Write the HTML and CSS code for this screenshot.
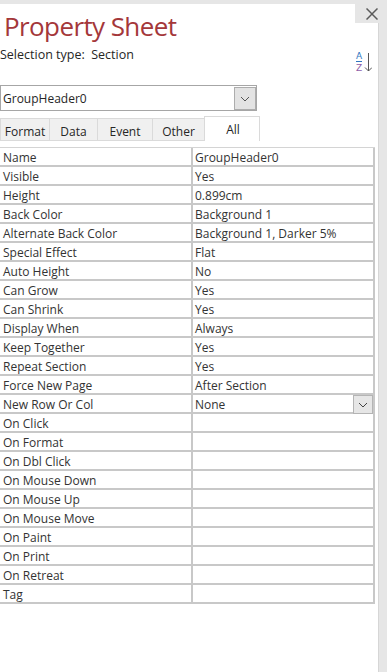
FILE: index.html
```html
<!DOCTYPE html>
<html lang="en">

<head>
  <meta charset="UTF-8">
  <meta name="viewport" content="width=device-width, initial-scale=1.0">
  <title>Property Sheet</title>
  <link rel="stylesheet" href="styles.css">
</head>

<body>
  <div class="topbar"></div>

  <div class="pane">
    <div class="sheet">
      <h1 class="sheet-title">Property Sheet</h1>

      <div class="subhead">
        <span class="selection-type">Selection type:&nbsp; Section</span>
        <span class="sort-icon">
          <span class="sort-letters">
            <span class="sort-a">A</span>
            <span class="sort-z">Z</span>
          </span>
          <svg width="8" height="20" viewBox="0 0 8 20">
            <line x1="4.5" y1="1" x2="4.5" y2="19" stroke="#555" stroke-width="1" />
            <polyline points="1,15.5 4.5,19 8,15.5" fill="none" stroke="#555" stroke-width="1" />
          </svg>
        </span>
      </div>

      <div class="combo">
        <span class="combo-text">GroupHeader0</span>
        <span class="combo-btn">
          <svg width="10" height="6" viewBox="0 0 10 6">
            <polyline points="1,1 5,5 9,1" fill="none" stroke="#555" stroke-width="1" />
          </svg>
        </span>
      </div>

      <div class="tabs">
        <span class="tab tab-format">Format</span>
        <span class="tab tab-data">Data</span>
        <span class="tab tab-event">Event</span>
        <span class="tab tab-other">Other</span>
        <span class="tab tab-all tab-active">All</span>
      </div>

      <div class="props">
        <div class="prop-row"><div class="prop-key">Name</div><div class="prop-val">GroupHeader0</div></div>
        <div class="prop-row"><div class="prop-key">Visible</div><div class="prop-val">Yes</div></div>
        <div class="prop-row"><div class="prop-key">Height</div><div class="prop-val">0.899cm</div></div>
        <div class="prop-row"><div class="prop-key">Back Color</div><div class="prop-val">Background 1</div></div>
        <div class="prop-row"><div class="prop-key">Alternate Back Color</div><div class="prop-val">Background 1, Darker 5%</div></div>
        <div class="prop-row"><div class="prop-key">Special Effect</div><div class="prop-val">Flat</div></div>
        <div class="prop-row"><div class="prop-key">Auto Height</div><div class="prop-val">No</div></div>
        <div class="prop-row"><div class="prop-key">Can Grow</div><div class="prop-val">Yes</div></div>
        <div class="prop-row"><div class="prop-key">Can Shrink</div><div class="prop-val">Yes</div></div>
        <div class="prop-row"><div class="prop-key">Display When</div><div class="prop-val">Always</div></div>
        <div class="prop-row"><div class="prop-key">Keep Together</div><div class="prop-val">Yes</div></div>
        <div class="prop-row"><div class="prop-key">Repeat Section</div><div class="prop-val">Yes</div></div>
        <div class="prop-row"><div class="prop-key">Force New Page</div><div class="prop-val">After Section</div></div>
        <div class="prop-row">
          <div class="prop-key">New Row Or Col</div>
          <div class="prop-val prop-val-drop">
            <span class="prop-text">None</span>
            <span class="drop-btn">
              <svg width="10" height="6" viewBox="0 0 10 6">
                <polyline points="1,1 5,5 9,1" fill="none" stroke="#444" stroke-width="1" />
              </svg>
            </span>
          </div>
        </div>
        <div class="prop-row"><div class="prop-key">On Click</div><div class="prop-val"></div></div>
        <div class="prop-row"><div class="prop-key">On Format</div><div class="prop-val"></div></div>
        <div class="prop-row"><div class="prop-key">On Dbl Click</div><div class="prop-val"></div></div>
        <div class="prop-row"><div class="prop-key">On Mouse Down</div><div class="prop-val"></div></div>
        <div class="prop-row"><div class="prop-key">On Mouse Up</div><div class="prop-val"></div></div>
        <div class="prop-row"><div class="prop-key">On Mouse Move</div><div class="prop-val"></div></div>
        <div class="prop-row"><div class="prop-key">On Paint</div><div class="prop-val"></div></div>
        <div class="prop-row"><div class="prop-key">On Print</div><div class="prop-val"></div></div>
        <div class="prop-row"><div class="prop-key">On Retreat</div><div class="prop-val"></div></div>
        <div class="prop-row"><div class="prop-key">Tag</div><div class="prop-val"></div></div>
      </div>
    </div>

    <div class="gutter"></div>
  </div>

  <button class="close-btn" aria-label="Close">
    <svg width="12" height="12" viewBox="0 0 12 12">
      <line x1="0.5" y1="0.5" x2="11.5" y2="11.5" stroke="#5a5a5a" stroke-width="1.5" />
      <line x1="11.5" y1="0.5" x2="0.5" y2="11.5" stroke="#5a5a5a" stroke-width="1.5" />
    </svg>
  </button>
</body>

</html>
```

FILE: styles.css
```css
* {
  margin: 0;
  padding: 0;
  box-sizing: border-box;
}

body {
  font-family: 'Open Sans', 'Noto Sans', sans-serif;
  font-size: 12px;
  color: #333;
  background: #fff;
  width: 387px;
  height: 672px;
  overflow: hidden;
  position: relative;
}

.topbar {
  height: 4px;
  background: #e6e6e6;
}

.pane {
  display: flex;
  height: 668px;
}

.sheet {
  flex: 1;
}

.gutter {
  width: 9px;
  background: #e6e6e6;
  border-left: 1px solid #d6d6d6;
}

.close-btn {
  position: absolute;
  top: 0;
  right: 0;
  width: 32px;
  height: 23px;
  border: none;
  background: #e6e6e6;
  display: flex;
  align-items: center;
  justify-content: center;
  padding-left: 2px;
  padding-top: 4px;
}

.sheet-title {
  margin-top: 7px;
  padding-left: 4px;
  font-size: 26px;
  font-weight: 400;
  line-height: 30px;
  letter-spacing: -0.6px;
  color: #a4373a;
}

.subhead {
  display: flex;
  justify-content: space-between;
  align-items: flex-start;
  height: 38px;
  margin-top: 6px;
  padding-right: 6px;
}

.selection-type {
  font-size: 12.5px;
  line-height: 16px;
  color: #262626;
}

/* A-Z sort button */
.sort-icon {
  display: flex;
  gap: 1px;
  margin-top: 4px;
}

.sort-icon svg {
  margin-top: 1px;
}

.sort-letters {
  display: flex;
  flex-direction: column;
  align-items: center;
  width: 8px;
  font-family: 'DejaVu Sans', sans-serif;
  font-size: 9px;
}

.sort-a {
  line-height: 10px;
  color: #2f77c0;
  border-bottom: 1px solid #2f77c0;
}

.sort-z {
  margin-top: 1px;
  line-height: 10px;
  color: #8e5ea8;
}

/* selection combo */
.combo {
  display: flex;
  align-items: center;
  width: 257px;
  height: 26px;
  border: 1px solid #a6a6a6;
  padding: 1px 0 0 2px;
}

.combo-text {
  flex: 1;
  color: #262626;
}

.combo-btn {
  width: 22px;
  height: 23px;
  background: #e3e3e3;
  border: 1px solid #adadad;
  display: flex;
  align-items: center;
  justify-content: center;
}

/* tabs */
.tabs {
  display: flex;
  align-items: flex-end;
  height: 25px;
  margin-top: 5px;
}

.tab {
  height: 23px;
  display: flex;
  align-items: center;
  justify-content: center;
  padding-top: 3px;
  background: #f0f0f0;
  border: 1px solid #dadada;
  border-right: none;
  color: #262626;
}

.tab-format { width: 49px; }
.tab-data { width: 48px; }
.tab-event { width: 55px; }
.tab-other { width: 52px; }

.tab-all {
  width: 56px;
  border-right: 1px solid #dadada;
}

.tab-active {
  height: 25px;
  padding-top: 0;
  padding-left: 2px;
  background: #fff;
  border-bottom: none;
}

/* property grid */
.props {
  width: 375px;
  margin-top: 6px;
  border-top: 1px solid #d4d4d4;
}

.prop-row {
  display: flex;
  height: 19px;
  border-bottom: 2px solid #c8c8c8;
  border-right: 2px solid #c8c8c8;
}

.prop-key {
  width: 193px;
  padding: 2px 0 0 3px;
  line-height: 15px;
  border-right: 2px solid #c8c8c8;
  white-space: nowrap;
}

.prop-val {
  flex: 1;
  padding: 2px 0 0 2px;
  line-height: 15px;
  white-space: nowrap;
}

.prop-val-drop {
  display: flex;
}

.prop-text {
  flex: 1;
}

.drop-btn {
  width: 20px;
  height: 19px;
  margin-top: -2px;
  background: #e6e6e6;
  border: 1px solid #b4b4b4;
  display: flex;
  align-items: center;
  justify-content: center;
}
```
